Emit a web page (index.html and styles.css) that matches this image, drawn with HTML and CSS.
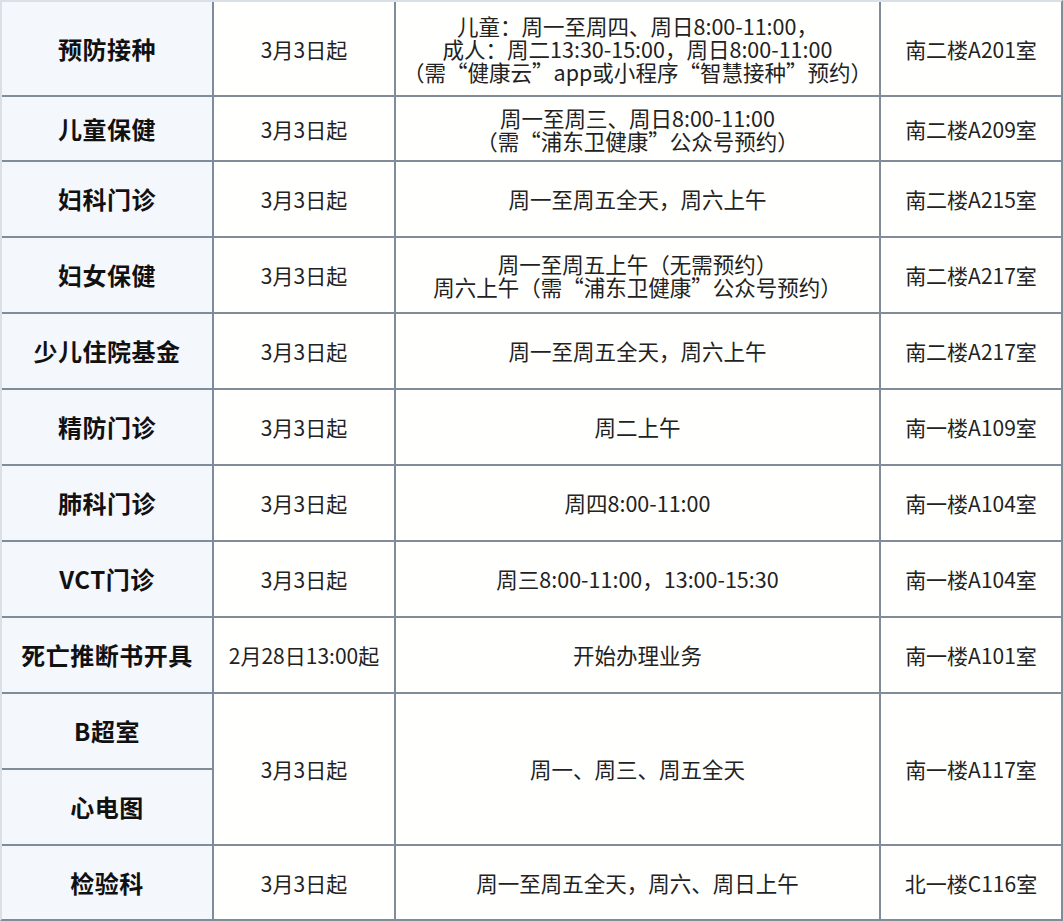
FILE: index.html
```html
<!DOCTYPE html>
<html lang="zh-CN">
<head>
<meta charset="utf-8">
<title>科室开诊安排</title>
<link rel="stylesheet" href="styles.css">
</head>
<body>
<div class="sheet">
  <div class="cell dept">预防接种</div>
  <div class="cell">3月3日起</div>
  <div class="cell desc"><div class="ln">儿童：周一至周四、周日8:00-11:00，</div><div class="ln">成人：周二13:30-15:00，周日8:00-11:00</div><div class="ln">（需“健康云”app或小程序“智慧接种”预约）</div></div>
  <div class="cell">南二楼A201室</div>

  <div class="cell dept">儿童保健</div>
  <div class="cell">3月3日起</div>
  <div class="cell desc"><div class="ln">周一至周三、周日8:00-11:00</div><div class="ln">（需“浦东卫健康”公众号预约）</div></div>
  <div class="cell">南二楼A209室</div>

  <div class="cell dept">妇科门诊</div>
  <div class="cell">3月3日起</div>
  <div class="cell desc">周一至周五全天，周六上午</div>
  <div class="cell">南二楼A215室</div>

  <div class="cell dept">妇女保健</div>
  <div class="cell">3月3日起</div>
  <div class="cell desc"><div class="ln">周一至周五上午（无需预约）</div><div class="ln">周六上午（需“浦东卫健康”公众号预约）</div></div>
  <div class="cell">南二楼A217室</div>

  <div class="cell dept">少儿住院基金</div>
  <div class="cell">3月3日起</div>
  <div class="cell desc">周一至周五全天，周六上午</div>
  <div class="cell">南二楼A217室</div>

  <div class="cell dept">精防门诊</div>
  <div class="cell">3月3日起</div>
  <div class="cell desc">周二上午</div>
  <div class="cell">南一楼A109室</div>

  <div class="cell dept">肺科门诊</div>
  <div class="cell">3月3日起</div>
  <div class="cell desc">周四8:00-11:00</div>
  <div class="cell">南一楼A104室</div>

  <div class="cell dept">VCT门诊</div>
  <div class="cell">3月3日起</div>
  <div class="cell desc">周三8:00-11:00，13:00-15:30</div>
  <div class="cell">南一楼A104室</div>

  <div class="cell dept">死亡推断书开具</div>
  <div class="cell">2月28日13:00起</div>
  <div class="cell desc">开始办理业务</div>
  <div class="cell">南一楼A101室</div>

  <div class="cell dept">B超室</div>
  <div class="cell span2">3月3日起</div>
  <div class="cell desc span2">周一、周三、周五全天</div>
  <div class="cell span2">南一楼A117室</div>
  <div class="cell dept">心电图</div>

  <div class="cell dept">检验科</div>
  <div class="cell">3月3日起</div>
  <div class="cell desc">周一至周五全天，周六、周日上午</div>
  <div class="cell">北一楼C116室</div>
</div>
</body>
</html>
```

FILE: styles.css
```css
html, body {
  margin: 0;
  padding: 0;
  background: #ffffff;
}

.sheet {
  width: 1063px;
  height: 921px;
  box-sizing: border-box;
  border-top: 2px solid #d9e0e8;
  border-left: 2px solid #d9e0e8;
  border-right: 2px solid #808c99;
  border-bottom: 2px solid #808c99;
  display: grid;
  grid-template-columns: 210px 180px 483px 180px;
  grid-template-rows: 93px 63px repeat(9, 74px) 73px;
  gap: 2px;
  background: #808c99;
  font-family: "Noto Sans CJK SC", "Noto Sans", sans-serif;
  color: #222222;
}

.cell {
  background: #fffffd;
  display: flex;
  flex-direction: column;
  align-items: center;
  justify-content: center;
  text-align: center;
  font-size: 21px;
  line-height: 26px;
  white-space: nowrap;
}

.desc {
  font-size: 21.5px;
}

.ln {
  height: 23px;
  line-height: 23px;
}

.dept {
  background: #f4f7fc;
  font-size: 24px;
  font-weight: 700;
  letter-spacing: 0.5px;
  color: #111111;
}

.span2 {
  grid-row: span 2;
}
```
